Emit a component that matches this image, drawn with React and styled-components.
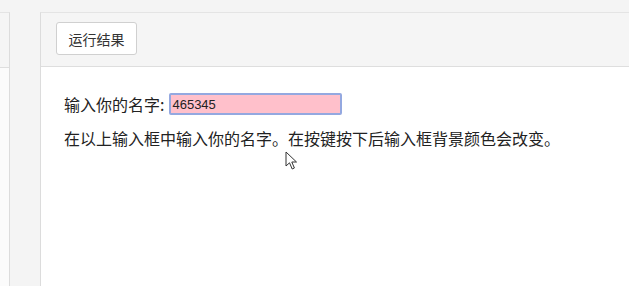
import React, { useState } from "react";
import styled, { createGlobalStyle } from "styled-components";

const GlobalStyle = createGlobalStyle`
  html, body {
    margin: 0;
    padding: 0;
    background: #f4f4f4;
    font-family: "Microsoft YaHei", "Noto Sans CJK SC", "Liberation Sans", sans-serif;
    overflow: hidden;
  }
`;

const Page = styled.div`
  display: flex;
  gap: 30px;
  padding-top: 12px;
  height: 286px;
  box-sizing: border-box;
`;

const SidePanel = styled.div`
  width: 10px;
  flex: none;
  display: flex;
  flex-direction: column;
  border-top: 1px solid #e4e4e4;
  border-right: 1px solid #dcdcdc;
  box-sizing: border-box;
`;

const SideHeader = styled.div`
  height: 54px;
  background: #f5f5f5;
  border-bottom: 1px solid #dedede;
`;

const SideBody = styled.div`
  flex: 1;
  background: #fbfbfb;
`;

const Panel = styled.div`
  flex: 1;
  display: flex;
  flex-direction: column;
  border-top: 1px solid #e4e4e4;
  border-left: 1px solid #dcdcdc;
  background: #fff;
`;

const Header = styled.div`
  height: 54px;
  box-sizing: border-box;
  background: #f5f5f5;
  border-bottom: 1px solid #dedede;
  display: flex;
  align-items: center;
  padding-left: 15px;
`;

const RunButton = styled.button`
  height: 33px;
  width: 81px;
  background: #fff;
  border: 1px solid #d0d0d0;
  border-radius: 3px;
  color: #333;
  font-family: inherit;
  font-size: 14px;
  padding: 0;
  margin-top: -2px;
`;

const Body = styled.div`
  position: relative;
  flex: 1;
  padding: 26px 0 0 23px;
  color: #222;
  font-size: 16px;
`;

const Row = styled.div`
  display: flex;
  align-items: center;
  height: 22px;
  gap: 5px;
`;

const NameInput = styled.input`
  width: 173px;
  height: 22px;
  box-sizing: border-box;
  background: #ffc0cb;
  border: 2px solid #94a8e0;
  border-radius: 2px;
  outline: none;
  padding: 0 1px;
  font-family: "Microsoft YaHei", "Liberation Sans", sans-serif;
  font-size: 13px;
  color: #222;
  caret-color: #000;
`;

const Note = styled.p`
  margin: 12px 0 0;
  line-height: 22px;
`;

const Pointer = styled.svg`
  position: absolute;
  left: 244px;
  top: 84px;
`;

export default function App() {
  const [name, setName] = useState("465345");

  return (
    <>
      <GlobalStyle />
      <Page>
        <SidePanel>
          <SideHeader />
          <SideBody />
        </SidePanel>
        <Panel>
          <Header>
            <RunButton>运行结果</RunButton>
          </Header>
          <Body>
            <Row>
              输入你的名字:
              <NameInput autoFocus value={name} onChange={(e) => setName(e.target.value)} />
            </Row>
            <Note>在以上输入框中输入你的名字。在按键按下后输入框背景颜色会改变。</Note>
            <Pointer width="13" height="20" viewBox="0 0 13 20">
              <path
                d="M1 1 L1 15 L4.5 11.8 L7.2 18 L9.4 17 L6.8 11 L11.5 11 Z"
                fill="#fff"
                stroke="#333"
                strokeWidth="1"
                strokeLinejoin="round"
              />
            </Pointer>
          </Body>
        </Panel>
      </Page>
    </>
  );
}
